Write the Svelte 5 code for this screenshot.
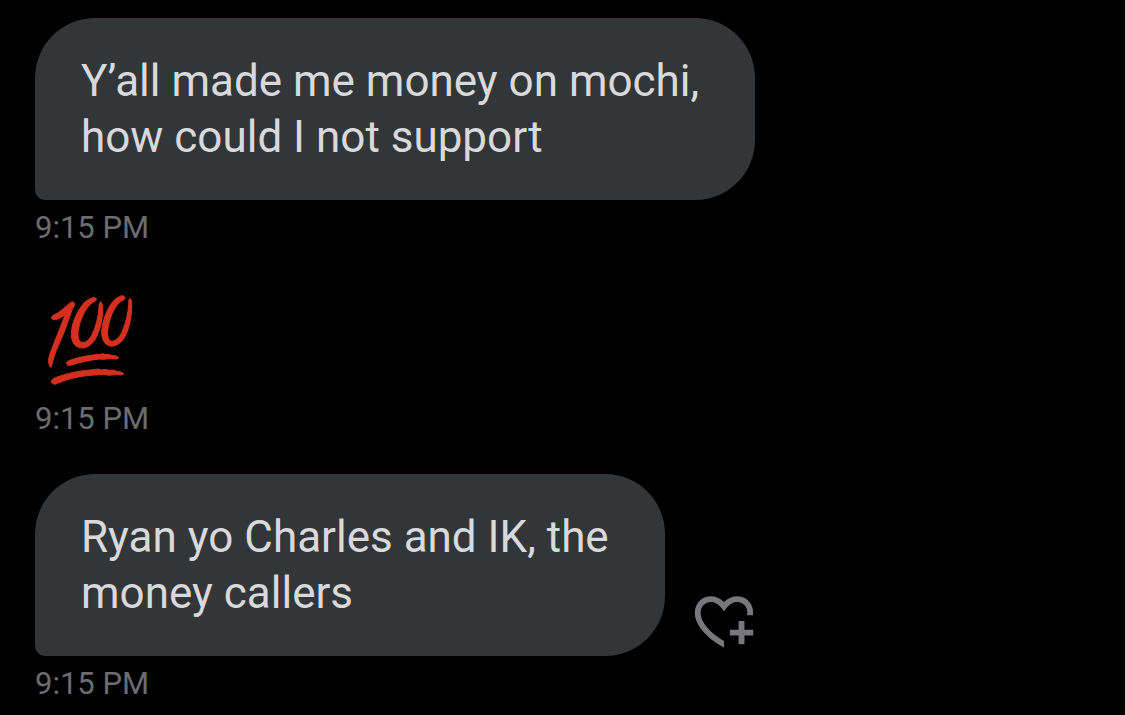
<script>
    const messages = [
        { kind: 'text', lines: ['Y’all made me money on mochi,', 'how could I not support'], time: '9:15 PM' },
        { kind: 'hundred', time: '9:15 PM' },
        { kind: 'text', lines: ['Ryan yo Charles and IK, the', 'money callers'], time: '9:15 PM', react: true }
    ]
</script>

<main>
    {#each messages as message}
        <article>
            <div class="row">
                {#if message.kind === 'text'}
                    <p class="bubble">
                        {#each message.lines as line}
                            <span>{line}</span>
                        {/each}
                    </p>
                {:else}
                    <svg class="emoji" viewBox="-15 -6 324 324" role="img" aria-label="Hundred points">
                        <path d="M35 96C37 91 43 89 49 86C63 78 76 66 87 56C92 50 103 49 104 56C105 62 100 66 97 73L72 143C60 171 50 192 43 213C39 224 37 238 33 247C29 247 27 239 26 231C25 219 29 207 35 193L69 106L75 90C65 97 57 101 47 104C40 106 33 102 35 96Z"/>
                        <path d="M165 38C172 41 169 48 163 50C149 55 135 76 126 98C115 125 109 155 119 168C129 180 146 168 155 151C168 126 175 95 177 67C177 59 178 51 182 50C187 53 189 69 188 83C186 112 179 140 166 162C152 187 125 196 108 183C89 168 91 132 104 101C116 71 134 46 151 41C156 39 161 37 165 38Z"/>
                        <path d="M251 33C258 37 255 43 249 46C234 52 220 74 212 98C203 126 199 153 208 164C218 176 235 162 245 143C257 118 264 87 266 59C266 51 266 42 270 40C275 43 276 58 275 73C273 105 267 133 254 157C240 181 214 191 198 177C180 161 183 128 194 96C205 65 221 41 238 35C243 32 248 31 251 33Z"/>
                        <path d="M80 234C81 228 87 227 92 225C121 215 151 210 181 208L189 206L196 209L207 208L216 212L226 212L237 218L229 222L212 220L190 223L179 222C151 225 123 231 98 239C88 243 79 242 80 234Z"/>
                        <path d="M34 289C34 284 40 281 46 278C83 264 124 256 162 254L174 252L184 255L196 253L207 256L220 255L231 259L242 261L252 266L243 270L229 268L208 271L190 268L162 270C122 273 87 280 53 295C43 300 34 297 34 289Z"/>
                    </svg>
                {/if}
                {#if message.react}
                    <button type="button" aria-label="Add reaction">
                        <svg viewBox="0 0 24 24" aria-hidden="true">
                            <path d="M17 12v3h-2.998v2h3v3h2v-3h3v-2h-3.001v-3H17zm-5 6.839c-3.871-2.34-6.053-4.639-7.127-6.609-1.112-2.04-1.031-3.7-.479-4.82.561-1.13 1.667-1.84 2.91-1.91 1.222-.06 2.68.51 3.892 2.16l.806 1.09.805-1.09c1.211-1.65 2.668-2.22 3.89-2.16 1.242.07 2.347.78 2.908 1.91.334.677.49 1.554.321 2.59h2.011c.153-1.283-.039-2.469-.539-3.48-.887-1.79-2.647-2.91-4.601-3.01-1.65-.09-3.367.56-4.796 2.01-1.43-1.45-3.147-2.1-4.798-2.01-1.954.1-3.714 1.22-4.601 3.01-.896 1.81-.846 4.17.514 6.67 1.353 2.48 4.003 5.12 8.382 7.67l.502.299v-2.32z"/>
                        </svg>
                    </button>
                {/if}
            </div>
            <time>{message.time}</time>
        </article>
    {/each}
</main>

<style>
    :global(body) {
        background: #000000;
    }

    main {
        display: flex;
        flex-direction: column;
        gap: 35px;
        padding: 18px 35px 11px;
        font-family: Roboto, "Liberation Sans", sans-serif;
    }

    .row {
        display: flex;
        align-items: flex-end;
        gap: 24px;
    }

    .bubble {
        margin: 0;
        padding: 35px 56px 35px 46px;
        border-radius: 60px 60px 60px 10px;
        background: #323639;
        color: #d9d9dc;
        font-size: 44px;
        line-height: 56px;
    }

    .bubble span {
        display: block;
    }

    .emoji {
        display: block;
        width: 108px;
        height: 108px;
        fill: #d5301f;
        stroke: #d5301f;
        stroke-width: 3;
        stroke-linejoin: round;
    }

    button {
        width: 70px;
        height: 70px;
        padding: 0;
        border: 0;
        background: none;
        color: #77777d;
        cursor: pointer;
    }

    button svg {
        display: block;
        fill: currentColor;
    }

    time {
        display: block;
        margin-top: 8px;
        color: #6c6c71;
        font-size: 31px;
        line-height: 40px;
    }
</style>
